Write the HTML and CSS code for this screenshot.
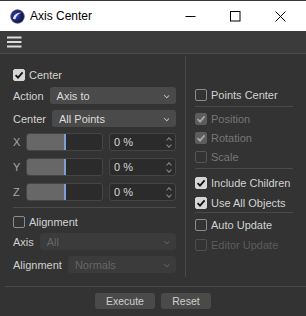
FILE: index.html
```html
<!DOCTYPE html>
<html lang="en">
  <head>
    <meta charset="utf8">
    <title>Axis Center</title>
    <link rel="stylesheet" href="styles.css">
  </head>
  <body>
    <div class="window">
      <header class="titlebar">
        <svg class="app-icon" width="15" height="15" viewBox="0 0 15 15">
          <defs>
            <radialGradient id="ball" cx="0.4" cy="0.45" r="0.65">
              <stop offset="0" stop-color="#3c4ca8"/>
              <stop offset="0.55" stop-color="#18206a"/>
              <stop offset="1" stop-color="#05081e"/>
            </radialGradient>
          </defs>
          <circle cx="7.5" cy="7.5" r="7" fill="url(#ball)"/>
          <path d="M3 9.8 C3.6 5.6 7.4 3.2 11.6 3.8 C8.6 4.6 6.2 6.6 5.2 10.4 Z" fill="#e8ebff"/>
          <circle cx="7.5" cy="7.5" r="6.8" fill="none" stroke="#8a90b8" stroke-width="0.6"/>
        </svg>
        <span class="title">Axis Center</span>
        <div class="controls">
          <span class="ctl">
            <svg width="11" height="11" viewBox="0 0 11 11"><path d="M0.5 5.5 H10.5" stroke="#000" stroke-width="1"/></svg>
          </span>
          <span class="ctl">
            <svg width="11" height="11" viewBox="0 0 11 11"><rect x="0.5" y="0.5" width="9.5" height="9.5" fill="none" stroke="#000" stroke-width="1"/></svg>
          </span>
          <span class="ctl">
            <svg width="11" height="11" viewBox="0 0 11 11"><path d="M0.5 0.5 L10.5 10.5 M10.5 0.5 L0.5 10.5" stroke="#000" stroke-width="1"/></svg>
          </span>
        </div>
      </header>

      <nav class="menubar">
        <svg width="15" height="12" viewBox="0 0 15 12"><path d="M0 1.5 H14.5 M0 6 H14.5 M0 10.5 H14.5" stroke="#dcdcdc" stroke-width="2"/></svg>
      </nav>

      <main class="content">
        <section class="left">
          <label class="check on row-center">
            <span class="box"><svg width="12" height="12" viewBox="0 0 12 12"><path d="M2.6 6.2 L5 8.6 L9.6 3.4" fill="none" stroke="#111" stroke-width="1.8"/></svg></span>
            Center
          </label>

          <div class="field row-action">
            <span class="label">Action</span>
            <span class="select">Axis to<i class="chev"></i></span>
          </div>
          <div class="field row-gap6">
            <span class="label">Center</span>
            <span class="select">All Points<i class="chev"></i></span>
          </div>

          <div class="slider-row row-gap6">
            <span class="axis">X</span>
            <span class="slider"><span class="fill"></span></span>
            <span class="number">0 %<i class="spin"></i></span>
          </div>
          <div class="slider-row row-gap7">
            <span class="axis">Y</span>
            <span class="slider"><span class="fill"></span></span>
            <span class="number">0 %<i class="spin"></i></span>
          </div>
          <div class="slider-row row-gap7">
            <span class="axis">Z</span>
            <span class="slider"><span class="fill"></span></span>
            <span class="number">0 %<i class="spin"></i></span>
          </div>

          <hr class="sep sep-left">

          <label class="check row-align">
            <span class="box"></span>
            Alignment
          </label>
          <div class="field disabled row-axis">
            <span class="label">Axis</span>
            <span class="select">All<i class="chev"></i></span>
          </div>
          <div class="field disabled row-gap6">
            <span class="label">Alignment</span>
            <span class="select">Normals<i class="chev"></i></span>
          </div>
        </section>

        <div class="divider"></div>

        <section class="right">
          <label class="check">
            <span class="box"></span>
            Points Center
          </label>
          <hr class="sep sep-a">
          <label class="check on disabled mt4">
            <span class="box"><svg width="12" height="12" viewBox="0 0 12 12"><path d="M2.6 6.2 L5 8.6 L9.6 3.4" fill="none" stroke="#a8a8a8" stroke-width="1.8"/></svg></span>
            Position
          </label>
          <label class="check on disabled mt3">
            <span class="box"><svg width="12" height="12" viewBox="0 0 12 12"><path d="M2.6 6.2 L5 8.6 L9.6 3.4" fill="none" stroke="#a8a8a8" stroke-width="1.8"/></svg></span>
            Rotation
          </label>
          <label class="check disabled mt3">
            <span class="box"></span>
            Scale
          </label>
          <hr class="sep sep-b">
          <label class="check on mt6">
            <span class="box"><svg width="12" height="12" viewBox="0 0 12 12"><path d="M2.6 6.2 L5 8.6 L9.6 3.4" fill="none" stroke="#111" stroke-width="1.8"/></svg></span>
            Include Children
          </label>
          <label class="check on mt4">
            <span class="box"><svg width="12" height="12" viewBox="0 0 12 12"><path d="M2.6 6.2 L5 8.6 L9.6 3.4" fill="none" stroke="#111" stroke-width="1.8"/></svg></span>
            Use All Objects
          </label>
          <hr class="sep sep-c">
          <label class="check mt4">
            <span class="box"></span>
            Auto Update
          </label>
          <label class="check dim mt4">
            <span class="box"></span>
            Editor Update
          </label>
        </section>
      </main>

      <footer class="footer">
        <button class="btn btn-execute">Execute</button>
        <button class="btn btn-reset">Reset</button>
      </footer>
    </div>
  </body>
</html>
```

FILE: styles.css
```css
:root {
  font-family: "Liberation Sans", Arial, sans-serif;
  font-size: 11px;
}

body {
  margin: 0;
  background-color: #333;
  color: #d2d2d2;
}

.window {
  width: 306px;
  height: 316px;
  display: flex;
  flex-direction: column;
  overflow: hidden;
}

/* title bar */
.titlebar {
  height: 30px;
  border-top: 1px solid #3a3a3a;
  background-color: #fff;
  display: flex;
  align-items: center;
  color: #000;
  flex: none;
}
.app-icon {
  margin-left: 10px;
  margin-top: 1px;
}
.title {
  margin-left: 5px;
  font-size: 12px;
}
.controls {
  margin-left: auto;
  margin-right: 3px;
  display: flex;
}
.ctl {
  width: 45px;
  height: 30px;
  display: flex;
  align-items: center;
  justify-content: center;
}

/* menu bar */
.menubar {
  height: 22px;
  background-color: #3b3b3b;
  border-bottom: 1px solid #4c4c4c;
  display: flex;
  align-items: center;
  padding-left: 7px;
  flex: none;
}

/* content */
.content {
  height: 232px;
  display: flex;
  flex: none;
}
.left {
  width: 163px;
  padding: 13px 9px 0 13px;
  display: flex;
  flex-direction: column;
}
.divider {
  width: 1px;
  margin-top: 2px;
  height: 221px;
  background-color: #4a4a4a;
}
.right {
  width: 98px;
  padding: 33px 0 0 9px;
  display: flex;
  flex-direction: column;
}

.sep {
  border: none;
  height: 1px;
  margin: 0;
  background-color: #4a4a4a;
  flex: none;
}
.sep-left { margin-top: 6px; }
.sep-a { margin-top: 3px; }
.sep-b { margin-top: 3px; }
.sep-c { margin-top: 1px; }

/* checkboxes */
.check {
  height: 16px;
  display: flex;
  align-items: center;
  gap: 4px;
  flex: none;
  white-space: nowrap;
}
.check .box {
  width: 10px;
  height: 10px;
  border: 1px solid #8c8c8c;
  border-radius: 2px;
  flex: none;
  position: relative;
}
.check .box svg {
  position: absolute;
  left: -1px;
  top: -1px;
}
.check.on .box {
  background-color: #d6d6d6;
  border-color: #d6d6d6;
}
.check.disabled {
  color: #767676;
}
.check.disabled .box {
  border-color: #555;
}
.check.on.disabled .box {
  background-color: #5c5c5c;
  border-color: #5c5c5c;
}
.check.dim {
  color: #5c5c5c;
}
.check.dim .box {
  border-color: #4f4f4f;
}

.mt3 { margin-top: 3px; }
.mt4 { margin-top: 4px; }
.mt6 { margin-top: 6px; }

.row-action { margin-top: 4px; }
.row-gap6 { margin-top: 6px; }
.row-gap7 { margin-top: 7px; }
.row-align { margin-top: 6px; }
.row-axis { margin-top: 3px; }

/* dropdown rows */
.field {
  height: 17px;
  display: flex;
  align-items: center;
  gap: 6px;
  flex: none;
}
.select {
  flex: 1;
  height: 17px;
  box-sizing: border-box;
  padding-left: 7px;
  background-color: #4a4a4a;
  border-radius: 3px;
  display: flex;
  align-items: center;
  position: relative;
  color: #dcdcdc;
}
.chev {
  position: absolute;
  right: 7px;
  top: 6px;
  width: 4px;
  height: 4px;
  border-right: 1px solid #cfcfcf;
  border-bottom: 1px solid #cfcfcf;
  transform: rotate(45deg) scale(0.9, 0.7);
}
.field.disabled .label {
  color: #cfcfcf;
}
.field.disabled .select {
  background-color: #3b3b3b;
  color: #666;
}
.field.disabled .chev {
  border-color: #666;
}

/* slider rows */
.slider-row {
  height: 18px;
  display: flex;
  align-items: center;
  flex: none;
}
.axis {
  width: 13px;
  color: #a8a8a8;
}
.slider {
  width: 77px;
  height: 18px;
  box-sizing: border-box;
  border: 1px solid #454545;
  border-radius: 3px;
  background-color: #2b2b2b;
  display: flex;
  overflow: hidden;
}
.fill {
  width: 37px;
  background-color: #676767;
  border-right: 2px solid #7f9fd2;
}
.number {
  margin-left: 6px;
  width: 67px;
  height: 18px;
  box-sizing: border-box;
  border: 1px solid #454545;
  border-radius: 3px;
  background-color: #2b2b2b;
  padding-left: 4px;
  display: flex;
  align-items: center;
  position: relative;
  color: #d6d6d6;
}
.spin::before,
.spin::after {
  content: "";
  position: absolute;
  right: 4px;
  width: 3px;
  height: 3px;
  border-left: 1px solid #8a8a8a;
  border-top: 1px solid #8a8a8a;
}
.spin::before {
  top: 4px;
  transform: rotate(45deg);
}
.spin::after {
  top: 9px;
  transform: rotate(225deg);
}

/* footer */
.footer {
  margin-left: 5px;
  border-top: 1px solid #4a4a4a;
  padding-top: 6px;
  display: flex;
  justify-content: center;
  gap: 6px;
  padding-right: 5px;
}
.btn {
  height: 16px;
  border: none;
  border-radius: 3px;
  background-color: #4a4a4a;
  color: #cfcfcf;
  font-family: inherit;
  font-size: 10.5px;
  padding: 0;
}
.btn-execute { width: 60px; }
.btn-reset { width: 50px; }
```
